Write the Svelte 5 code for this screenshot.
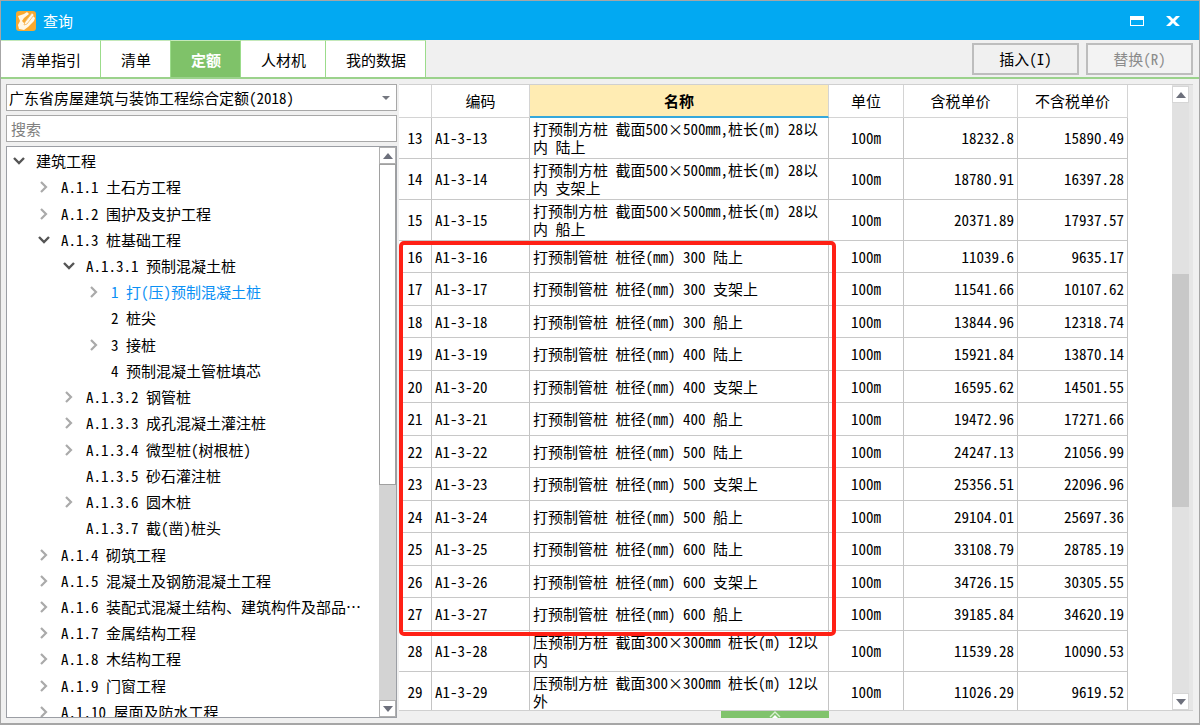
<script lang="ts">
	interface TreeNode {
		level: number;
		label: string;
		state?: 'open' | 'closed';
	}

	const tabs = ['清单指引', '清单', '定额', '人材机', '我的数据'];
	let activeTab = $state('定额');

	let library = $state('广东省房屋建筑与装饰工程综合定额(2018)');
	let keyword = $state('');

	const nodes: TreeNode[] = [
		{ level: 0, label: '建筑工程', state: 'open' },
		{ level: 1, label: 'A.1.1 土石方工程', state: 'closed' },
		{ level: 1, label: 'A.1.2 围护及支护工程', state: 'closed' },
		{ level: 1, label: 'A.1.3 桩基础工程', state: 'open' },
		{ level: 2, label: 'A.1.3.1 预制混凝土桩', state: 'open' },
		{ level: 3, label: '1 打(压)预制混凝土桩', state: 'closed' },
		{ level: 3, label: '2 桩尖' },
		{ level: 3, label: '3 接桩', state: 'closed' },
		{ level: 3, label: '4 预制混凝土管桩填芯' },
		{ level: 2, label: 'A.1.3.2 钢管桩', state: 'closed' },
		{ level: 2, label: 'A.1.3.3 成孔混凝土灌注桩', state: 'closed' },
		{ level: 2, label: 'A.1.3.4 微型桩(树根桩)', state: 'closed' },
		{ level: 2, label: 'A.1.3.5 砂石灌注桩' },
		{ level: 2, label: 'A.1.3.6 圆木桩', state: 'closed' },
		{ level: 2, label: 'A.1.3.7 截(凿)桩头' },
		{ level: 1, label: 'A.1.4 砌筑工程', state: 'closed' },
		{ level: 1, label: 'A.1.5 混凝土及钢筋混凝土工程', state: 'closed' },
		{ level: 1, label: 'A.1.6 装配式混凝土结构、建筑构件及部品…', state: 'closed' },
		{ level: 1, label: 'A.1.7 金属结构工程', state: 'closed' },
		{ level: 1, label: 'A.1.8 木结构工程', state: 'closed' },
		{ level: 1, label: 'A.1.9 门窗工程', state: 'closed' },
		{ level: 1, label: 'A.1.10 屋面及防水工程', state: 'closed' }
	];
	let selectedNode = $state('1 打(压)预制混凝土桩');

	const rows = [
		{ no: 13, name: '打预制方桩 截面500×500mm,桩长(m) 28以内 陆上', taxed: '18232.8', untaxed: '15890.49' },
		{ no: 14, name: '打预制方桩 截面500×500mm,桩长(m) 28以内 支架上', taxed: '18780.91', untaxed: '16397.28' },
		{ no: 15, name: '打预制方桩 截面500×500mm,桩长(m) 28以内 船上', taxed: '20371.89', untaxed: '17937.57' },
		{ no: 16, name: '打预制管桩 桩径(mm) 300 陆上', taxed: '11039.6', untaxed: '9635.17' },
		{ no: 17, name: '打预制管桩 桩径(mm) 300 支架上', taxed: '11541.66', untaxed: '10107.62' },
		{ no: 18, name: '打预制管桩 桩径(mm) 300 船上', taxed: '13844.96', untaxed: '12318.74' },
		{ no: 19, name: '打预制管桩 桩径(mm) 400 陆上', taxed: '15921.84', untaxed: '13870.14' },
		{ no: 20, name: '打预制管桩 桩径(mm) 400 支架上', taxed: '16595.62', untaxed: '14501.55' },
		{ no: 21, name: '打预制管桩 桩径(mm) 400 船上', taxed: '19472.96', untaxed: '17271.66' },
		{ no: 22, name: '打预制管桩 桩径(mm) 500 陆上', taxed: '24247.13', untaxed: '21056.99' },
		{ no: 23, name: '打预制管桩 桩径(mm) 500 支架上', taxed: '25356.51', untaxed: '22096.96' },
		{ no: 24, name: '打预制管桩 桩径(mm) 500 船上', taxed: '29104.01', untaxed: '25697.36' },
		{ no: 25, name: '打预制管桩 桩径(mm) 600 陆上', taxed: '33108.79', untaxed: '28785.19' },
		{ no: 26, name: '打预制管桩 桩径(mm) 600 支架上', taxed: '34726.15', untaxed: '30305.55' },
		{ no: 27, name: '打预制管桩 桩径(mm) 600 船上', taxed: '39185.84', untaxed: '34620.19' },
		{ no: 28, name: '压预制方桩 截面300×300mm 桩长(m) 12以内', taxed: '11539.28', untaxed: '10090.53' },
		{ no: 29, name: '压预制方桩 截面300×300mm 桩长(m) 12以外', taxed: '11026.29', untaxed: '9619.52' }
	];

	// rows 16-27 (管桩) are outlined as one group
	const groups = [
		{ marked: false, rows: rows.slice(0, 3) },
		{ marked: true, rows: rows.slice(3, 15) },
		{ marked: false, rows: rows.slice(15) }
	];
</script>

{#snippet arrow(down: boolean)}
	<svg width="12" height="6" viewBox="0 0 12 6">
		<path d={down ? 'M1 0h10L6 6z' : 'M1 6h10L6 0z'} fill="#6d707c" />
	</svg>
{/snippet}

<div class="window">
	<header class="titlebar">
		<svg class="logo" width="20" height="20" viewBox="0 0 20 20">
			<rect width="20" height="20" rx="3" fill="#f8a92f" />
			<path d="M2 5l6-2 3-2 2 2-5 4-2 3 3 3 8-8 2 2-1 3-6 6-4 3-5-1-1-4 2-4z" fill="#fff8e8" />
			<path d="M9 11l7-9 2 2-7 9-3 1z" fill="#fff8e8" stroke="#f6b95c" stroke-width="0.8" />
		</svg>
		<h1>查询</h1>
		<button class="win-btn" type="button" aria-label="最大化">
			<svg width="14" height="10" viewBox="0 0 14 10">
				<path d="M0 0h14v10H0zM1 4v5h12V4z" fill="#fff" fill-rule="evenodd" />
			</svg>
		</button>
		<button class="win-btn" type="button" aria-label="关闭">
			<svg width="14" height="10" viewBox="0 0 14 10">
				<path d="M0 0h4l3 3 3-3h4L9 5l5 5h-4L7 7l-3 3H0l5-5z" fill="#fff" />
			</svg>
		</button>
	</header>

	<nav class="toolbar">
		{#each tabs as tab (tab)}
			<button class="tab" class:active={activeTab === tab} onclick={() => (activeTab = tab)} type="button">
				{tab}
			</button>
		{/each}
		<div class="actions">
			<button class="action" type="button">插入(I)</button>
			<button class="action" type="button" disabled>替换(R)</button>
		</div>
	</nav>

	<main class="content">
		<aside class="sidebar">
			<div class="select-wrap">
				<select bind:value={library} aria-label="定额库">
					<option>广东省房屋建筑与装饰工程综合定额(2018)</option>
				</select>
				<svg width="8" height="4" viewBox="0 0 8 4"><path d="M0 0h8L4 4z" fill="#74777f" /></svg>
			</div>
			<input class="search" type="text" placeholder="搜索" aria-label="搜索" bind:value={keyword} />
			<div class="tree">
				<div class="tree-view">
					<ul>
						{#each nodes as node (node.label)}
							<li style:padding-left="{node.level * 25 + 5}px">
								{#if node.state}
									<button class="toggle" type="button" aria-label="展开或收起">
										{#if node.state === 'open'}
											<svg width="12" height="8" viewBox="0 0 12 8">
												<path d="M1 1l5 5 5-5" fill="none" stroke="#555" stroke-width="2.4" />
											</svg>
										{:else}
											<svg width="8" height="12" viewBox="0 0 8 12">
												<path d="M1 1l5 5-5 5" fill="none" stroke="#aaa" stroke-width="2.2" />
											</svg>
										{/if}
									</button>
								{:else}
									<span class="toggle"></span>
								{/if}
								<button
									class="label"
									class:selected={selectedNode === node.label}
									onclick={() => (selectedNode = node.label)}
									type="button"
								>
									{node.label}
								</button>
							</li>
						{/each}
					</ul>
				</div>
				<div class="scrollbar">
					<button class="scroll-btn" type="button" aria-label="向上">{@render arrow(false)}</button>
					<div class="thumb"></div>
					<div class="rest"></div>
					<button class="scroll-btn" type="button" aria-label="向下">{@render arrow(true)}</button>
				</div>
			</div>
		</aside>

		<section class="result">
			<div class="grid">
				<div class="grid-view">
					<table>
						<colgroup>
							<col class="c-no" />
							<col class="c-code" />
							<col />
							<col class="c-unit" />
							<col class="c-taxed" />
							<col class="c-untaxed" />
						</colgroup>
						<thead>
							<tr>
								<th></th>
								<th>编码</th>
								<th class="sorted">名称</th>
								<th>单位</th>
								<th>含税单价</th>
								<th>不含税单价</th>
							</tr>
						</thead>
						{#each groups as group, i (i)}
							<tbody class:marked={group.marked}>
								{#each group.rows as row (row.no)}
									<tr class:tall={!group.marked}>
										<td class="no">{row.no}</td>
										<td>A1-3-{row.no}</td>
										<td>{row.name}</td>
										<td class="unit">100m</td>
										<td class="price">{row.taxed}</td>
										<td class="price">{row.untaxed}</td>
									</tr>
								{/each}
							</tbody>
						{/each}
					</table>
				</div>
				<div class="scrollbar flat">
					<button class="scroll-btn" type="button" aria-label="向上">{@render arrow(false)}</button>
					<div class="before"></div>
					<div class="thumb"></div>
					<div class="rest"></div>
					<button class="scroll-btn" type="button" aria-label="向下">{@render arrow(true)}</button>
				</div>
			</div>
			<div class="drawer">
				<button type="button" aria-label="展开">
					<svg width="12" height="7" viewBox="0 0 12 7">
						<path d="M1 6l5-5 5 5" fill="none" stroke="#d9f0d2" stroke-width="1.4" />
						<path d="M3 7l3-3 3 3z" fill="#fff" />
					</svg>
				</button>
			</div>
		</section>
	</main>
</div>

<style>
	:global(body) {
		margin: 0;
	}

	.window {
		box-sizing: border-box;
		height: 100vh;
		display: flex;
		flex-direction: column;
		border: 1px solid #a6a6a6;
		border-bottom-width: 2px;
		background: #f0f0f0;
		color: #000;
		font-family: 'Noto Sans CJK SC', sans-serif;
		font-size: 15px;
		line-height: 18px;
		font-feature-settings: 'hwid';
	}

	button,
	select,
	input {
		font: inherit;
		font-feature-settings: inherit;
		color: inherit;
		margin: 0;
		padding: 0;
		border: 0;
		border-radius: 0;
		background: none;
		box-sizing: border-box;
	}

	svg {
		display: block;
	}

	.titlebar {
		flex: none;
		height: 39px;
		padding: 0 19px 0 15px;
		display: flex;
		align-items: center;
		background: #02a9f2;
		color: #fff;
	}

	.titlebar h1 {
		flex: 1;
		margin: 0 0 0 7px;
		font-size: 15px;
		font-weight: 400;
	}

	.win-btn {
		margin-left: 22px;
	}

	.toolbar {
		flex: none;
		height: 39px;
		box-sizing: border-box;
		display: flex;
		border-bottom: 2px solid #9bd28c;
	}

	.tab {
		padding: 2px 19px 0 20px;
		background: #fff;
		border-right: 1px solid #9bdc8b;
		border-top: 1px solid #c4e8ba;
	}

	.tab.active {
		background: #7fc269;
		color: #fff;
		font-weight: 700;
	}

	.actions {
		margin-left: auto;
		padding: 3px 6px 2px 0;
		display: flex;
		gap: 7px;
	}

	.action {
		width: 107px;
		border: 2px solid #bdbdbd;
	}

	.action:disabled {
		color: #8c8c8c;
		background: #f3f3f3;
	}

	.content {
		flex: 1;
		min-height: 0;
		display: flex;
		gap: 2px;
		padding: 5px 6px 0 5px;
	}

	.sidebar {
		flex: none;
		width: 391px;
		display: flex;
		flex-direction: column;
		gap: 4px;
		padding-bottom: 5px;
	}

	.select-wrap {
		display: grid;
		align-items: center;
	}

	.select-wrap > * {
		grid-area: 1 / 1;
	}

	.select-wrap svg {
		justify-self: end;
		margin-right: 7px;
		pointer-events: none;
	}

	select,
	.search {
		width: 100%;
		height: 27px;
		padding: 0 2px;
		border: 1px solid #a8a8a8;
		background: #fff;
		appearance: none;
	}

	.search {
		padding: 0 4px;
	}

	.search::placeholder {
		color: #808080;
	}

	.tree {
		flex: 1;
		min-height: 0;
		display: flex;
		border: 1px solid #9b9ea4;
		background: #fff;
	}

	.tree-view {
		flex: 1;
		min-width: 0;
		padding-top: 1px;
		overflow: hidden;
	}

	/* the last node runs under the bottom edge */
	ul {
		height: calc(100% + 8px);
		margin: 0;
		padding: 0;
		list-style: none;
		display: grid;
		grid-auto-rows: 1fr;
	}

	li {
		display: flex;
		align-items: center;
		min-height: 0;
	}

	.toggle {
		width: 14px;
		height: 14px;
		margin-right: 10px;
		display: grid;
		place-items: center;
	}

	.label {
		white-space: nowrap;
	}

	.label.selected {
		color: #0a90f5;
	}

	.scrollbar {
		flex: none;
		width: 17px;
		display: flex;
		flex-direction: column;
		background: #d3d3d3;
	}

	.scroll-btn {
		height: 17px;
		display: grid;
		place-items: center;
		background: #fff;
		border: 1px solid #b0b0b0;
	}

	.thumb {
		flex: 320;
		background: #fff;
		border: 1px solid #a0a0a0;
	}

	.rest {
		flex: 215;
	}

	.scrollbar.flat {
		width: 17px;
		padding-top: 1px;
		background: #e1e1e1;
		border-right: 4px solid #e6e6e6;
	}

	.flat .scroll-btn {
		border: 1px solid #d6d6d6;
	}

	.flat .before {
		flex: 171;
	}

	.flat .thumb {
		flex: 233;
		background: #c8c8c8;
		border: 0;
	}

	.flat .rest {
		flex: 186;
	}

	.result {
		flex: 1;
		min-width: 0;
		display: flex;
		flex-direction: column;
	}

	.grid {
		flex: 1;
		min-height: 0;
		display: flex;
		background: #fff;
		border-top: 1px solid #d0d0d0;
		border-bottom: 1px solid #d0d0d0;
	}

	.grid-view {
		flex: 1;
		min-width: 0;
		margin-right: 44px;
		overflow: hidden;
	}

	table {
		width: 100%;
		table-layout: fixed;
		border-collapse: separate;
		border-spacing: 0;
	}

	.c-no {
		width: 33px;
	}

	.c-code {
		width: 98px;
	}

	.c-unit {
		width: 75px;
	}

	.c-taxed {
		width: 114px;
	}

	.c-untaxed {
		width: 110px;
	}

	th,
	td {
		box-sizing: border-box;
		height: 32px;
		padding: 0 3px;
		border-right: 1px solid #c4c4c4;
		border-bottom: 1px solid #c8c8c8;
		text-align: left;
	}

	th {
		height: 33px;
		font-weight: 400;
		text-align: center;
		border-color: #d4d4d4;
	}

	th.sorted {
		background: #ffecb3;
		border-bottom: 2px solid #35a8dc;
		font-weight: 700;
	}

	.marked tr:nth-child(even) td {
		height: 33px;
	}

	.tall td {
		height: 41px;
	}

	td.no,
	td.unit {
		text-align: center;
	}

	td.price {
		text-align: right;
	}

	.marked {
		position: relative;
	}

	.marked::after {
		content: '';
		position: absolute;
		top: 0;
		bottom: -5px;
		left: 0;
		right: 292px;
		border: 4px solid #ff2015;
		border-radius: 5px;
		pointer-events: none;
	}

	.drawer {
		flex: none;
		height: 12px;
		display: flex;
		justify-content: center;
		padding-right: 42px;
	}

	.drawer button {
		width: 108px;
		height: 7px;
		display: grid;
		place-items: center;
		background: #80c36c;
	}
</style>
